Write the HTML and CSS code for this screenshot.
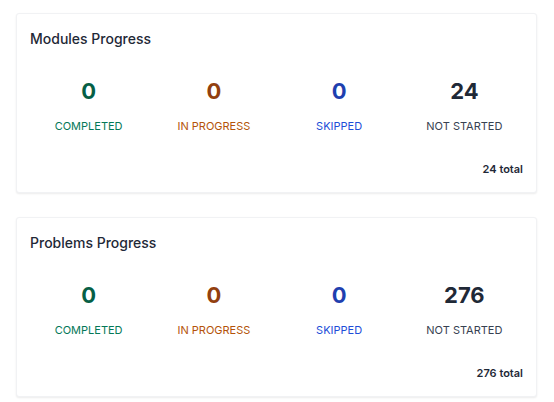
FILE: index.html
```html
<!DOCTYPE html>
<html lang="en">
<head>
  <meta charset="UTF-8" />
  <meta name="viewport" content="width=device-width, initial-scale=1.0"/>
  <title>Progress</title>
  <link rel="stylesheet" href="styles.css">
</head>
<body>

  <!-- Modules -->
  <div class="card">
    <h3 class="card-title">Modules Progress</h3>
    <div class="stats">
      <div class="stat completed"><div class="num">0</div><div class="label">COMPLETED</div></div>
      <div class="stat in-progress"><div class="num">0</div><div class="label">IN PROGRESS</div></div>
      <div class="stat skipped"><div class="num">0</div><div class="label">SKIPPED</div></div>
      <div class="stat not-started"><div class="num">24</div><div class="label">NOT STARTED</div></div>
    </div>
    <div class="total">24 total</div>
  </div>

  <!-- Problems -->
  <div class="card">
    <h3 class="card-title">Problems Progress</h3>
    <div class="stats">
      <div class="stat completed"><div class="num">0</div><div class="label">COMPLETED</div></div>
      <div class="stat in-progress"><div class="num">0</div><div class="label">IN PROGRESS</div></div>
      <div class="stat skipped"><div class="num">0</div><div class="label">SKIPPED</div></div>
      <div class="stat not-started"><div class="num">276</div><div class="label">NOT STARTED</div></div>
    </div>
    <div class="total">276 total</div>
  </div>

</body>
</html>
```

FILE: styles.css
```css
body {
  font-family: Inter, 'Noto Sans', sans-serif;
  margin: 0;
  padding: 13px 17px 0 16px;
  background-color: #ffffff;
  color: #111827;
}

.card {
  background: #fff;
  border: 1px solid #f1f2f4;
  border-radius: 3px;
  box-shadow: 0 1px 2px rgba(0, 0, 0, 0.08);
  padding: 13px 13px 14px 13px;
  margin-bottom: 24px;
  height: 180px;
  box-sizing: border-box;
}

.card-title {
  margin: 0;
  font-size: 14px;
  font-weight: 500;
  line-height: 24px;
  color: #1f2937;
}

.stats {
  display: grid;
  grid-template-columns: repeat(4, 1fr);
  gap: 8px;
  margin-top: 26px;
  text-align: center;
}

.num {
  font-size: 22px;
  font-weight: 700;
  line-height: 28px;
}

.label {
  font-size: 11px;
  line-height: 16px;
  margin-top: 13px;
}

.completed .num { color: #065f46; }
.completed .label { color: #047857; }
.in-progress .num { color: #92400e; }
.in-progress .label { color: #b45309; }
.skipped .num { color: #1e40af; }
.skipped .label { color: #1d4ed8; }
.not-started .num { color: #1f2937; }
.not-started .label { color: #374151; }

.total {
  text-align: right;
  font-size: 11px;
  font-weight: 600;
  line-height: 16px;
  margin-top: 27px;
  color: #1f2937;
}
```
